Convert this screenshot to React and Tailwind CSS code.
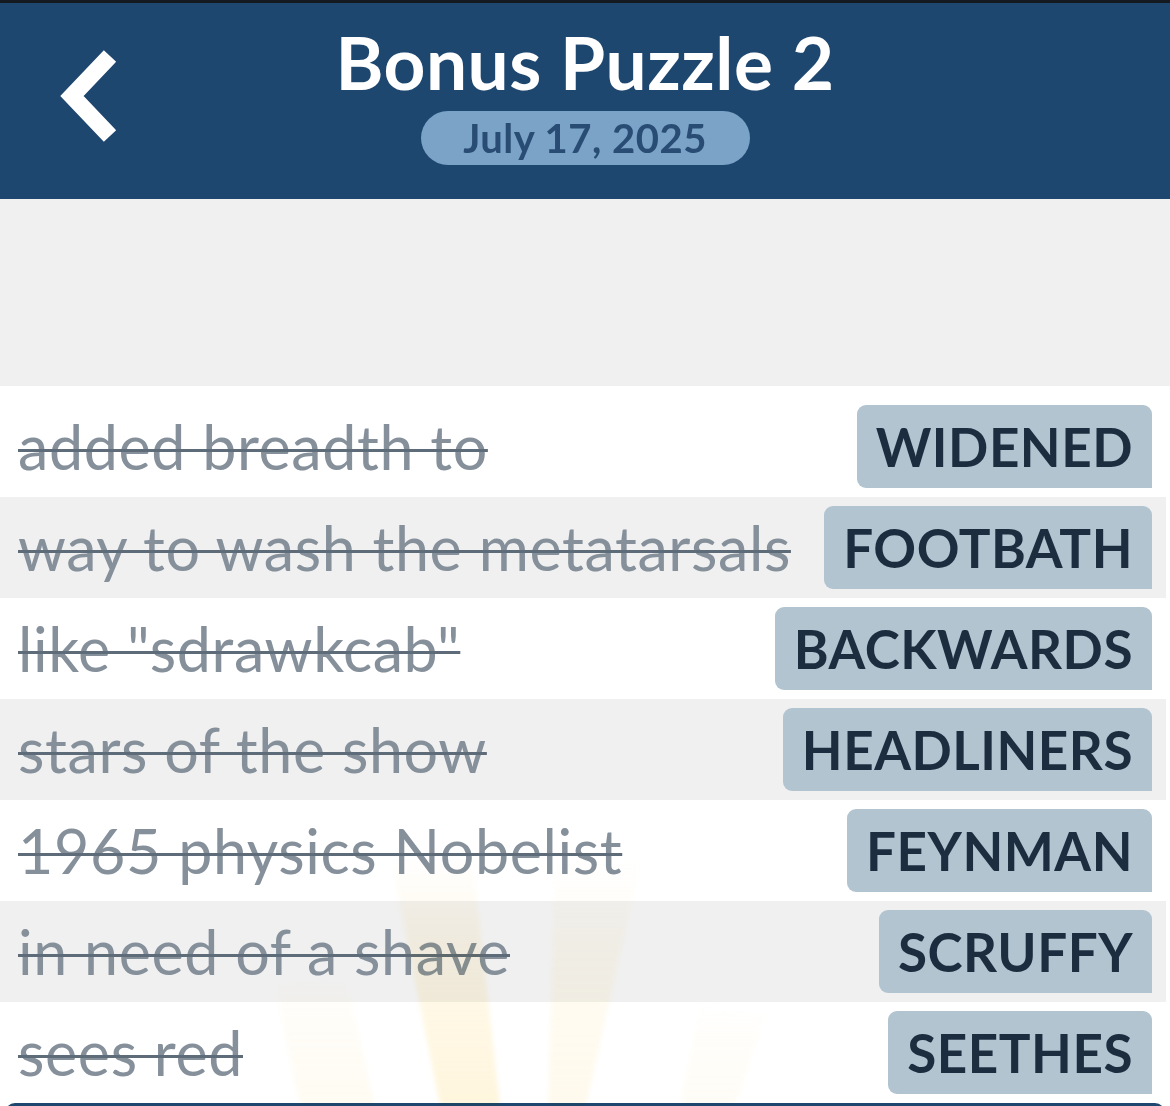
import React from "react";

const clues = [
  { clue: "added breadth to", answer: "WIDENED" },
  { clue: "way to wash the metatarsals", answer: "FOOTBATH" },
  { clue: 'like "sdrawkcab"', answer: "BACKWARDS" },
  { clue: "stars of the show", answer: "HEADLINERS" },
  { clue: "1965 physics Nobelist", answer: "FEYNMAN" },
  { clue: "in need of a shave", answer: "SCRUFFY" },
  { clue: "sees red", answer: "SEETHES" },
];

// faint sunburst behind the last rows
const Rays = () => (
  <svg
    className="absolute left-0 top-[450px] pointer-events-none mix-blend-multiply blur-[2px]"
    width="1170"
    height="270"
    viewBox="0 0 1170 270"
  >
    <defs>
      <linearGradient id="ray" x1="0" y1="0" x2="0" y2="1">
        <stop offset="0" stopColor="#ffe39a" stopOpacity="0" />
        <stop offset="0.35" stopColor="#ffe39a" stopOpacity="0.35" />
        <stop offset="1" stopColor="#ffe39a" stopOpacity="0.6" />
      </linearGradient>
    </defs>
    <polygon points="390,20 472,20 500,270 440,270" fill="url(#ray)" opacity="0.55" />
    <polygon points="555,20 642,20 586,270 548,270" fill="url(#ray)" opacity="0.3" />
    <polygon points="275,150 345,140 375,270 300,270" fill="url(#ray)" opacity="0.2" />
    <polygon points="700,170 765,180 735,270 680,270" fill="url(#ray)" opacity="0.15" />
  </svg>
);

const Row = ({ clue, answer, shaded, first }) => (
  <div
    className={`flex items-center justify-between mr-[4px] pl-[18px] pr-[14px] ${
      first ? "h-[111px] pt-[10px]" : "h-[101px]"
    } ${shaded ? "bg-[#f0f0f0]" : "bg-white"}`}
  >
    <span className="text-[61px] leading-none tracking-[0.6px] text-[#85909b] line-through decoration-[#5e6b78] decoration-[3px] whitespace-nowrap">
      {clue}
    </span>
    <span className="h-[83px] flex items-center px-[19px] rounded-t-[9px] rounded-bl-[9px] bg-[#b1c4d0] text-[#1c2d3f] text-[53px] font-bold leading-none tracking-[0.5px] whitespace-nowrap">
      {answer}
    </span>
  </div>
);

export default function App() {
  return (
    <div className="relative w-[1170px] h-[1106px] overflow-hidden bg-white font-['Lato',sans-serif]">
      <div className="h-[3px] bg-[#151a20]" />
      <header className="relative h-[196px] bg-[#1e4770] flex flex-col items-center pt-[23px]">
        <svg
          className="absolute left-[52px] top-[42px]"
          width="80"
          height="104"
          viewBox="0 0 80 104"
        >
          <polyline
            points="58,11 20,51 58,91"
            fill="none"
            stroke="#ffffff"
            strokeWidth="17"
            strokeLinejoin="miter"
          />
        </svg>
        <h1 className="text-[73px] font-bold text-white leading-none tracking-[0.5px]">
          Bonus Puzzle 2
        </h1>
        <div className="mt-[12px] h-[54px] w-[329px] rounded-full bg-[#7aa3c7] flex items-center justify-center text-[40px] font-bold text-[#284c73] leading-none tracking-[0.5px]">
          July 17, 2025
        </div>
      </header>
      <div className="h-[187px] bg-[#f0f0f0]" />
      <div className="relative">
        {clues.map((c, i) => (
          <Row key={c.answer} {...c} shaded={i % 2 === 1} first={i === 0} />
        ))}
        <Rays />
      </div>
      <div className="mx-[5px] h-[10px] rounded-t-[10px] bg-[#1e4770]" />
    </div>
  );
}
